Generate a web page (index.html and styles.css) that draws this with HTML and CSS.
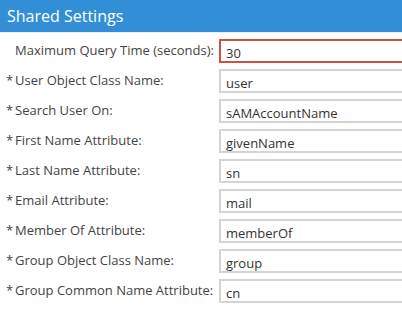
FILE: index.html
```html
<!DOCTYPE html>
<html>
<head>
<meta charset="utf-8">
<link rel="stylesheet" href="styles.css">
</head>
<body>
<div class="panel">
  <div class="panel-header">Shared Settings</div>
  <div class="form">
    <div class="row">
      <label class="label"><span class="req"></span>Maximum Query Time (seconds):</label>
      <div class="field invalid">30</div>
    </div>
    <div class="row">
      <label class="label"><span class="req">*</span>User Object Class Name:</label>
      <div class="field">user</div>
    </div>
    <div class="row">
      <label class="label"><span class="req">*</span>Search User On:</label>
      <div class="field">sAMAccountName</div>
    </div>
    <div class="row">
      <label class="label"><span class="req">*</span>First Name Attribute:</label>
      <div class="field">givenName</div>
    </div>
    <div class="row">
      <label class="label"><span class="req">*</span>Last Name Attribute:</label>
      <div class="field">sn</div>
    </div>
    <div class="row">
      <label class="label"><span class="req">*</span>Email Attribute:</label>
      <div class="field">mail</div>
    </div>
    <div class="row">
      <label class="label"><span class="req">*</span>Member Of Attribute:</label>
      <div class="field">memberOf</div>
    </div>
    <div class="row">
      <label class="label"><span class="req">*</span>Group Object Class Name:</label>
      <div class="field">group</div>
    </div>
    <div class="row">
      <label class="label"><span class="req">*</span>Group Common Name Attribute:</label>
      <div class="field">cn</div>
    </div>
  </div>
</div>
</body>
</html>
```
FILE: styles.css
```css
html, body {
  margin: 0;
  padding: 0;
  overflow: hidden;
  background: #ffffff;
}
body {
  font-family: "Open Sans", "DejaVu Sans", sans-serif;
  color: #444444;
  width: 402px;
  height: 310px;
}
.panel {
  width: 402px;
  overflow: hidden;
}
.panel-header {
  height: 32px;
  background: #328fd7;
  color: #ffffff;
  font-size: 16px;
  line-height: 33px;
  padding-left: 7px;
  border-bottom: 1px solid #e8f1fa;
}
.form {
  display: flex;
  flex-direction: column;
  gap: 6px;
  padding-top: 6px;
}
.row {
  display: flex;
  align-items: center;
  height: 24px;
}
.label {
  width: 213px;
  flex: none;
  padding-left: 6px;
  font-size: 13px;
  line-height: 18px;
  display: flex;
  align-items: baseline;
  margin-top: -2px;
  white-space: nowrap;
}
.req {
  width: 9px;
  flex: none;
  font-size: 13px;
}
.field {
  flex: none;
  width: 220px;
  border: 2px solid #d4d4d4;
  font-size: 13px;
  line-height: 20px;
  padding-left: 5px;
  padding-top: 2px;
  box-sizing: content-box;
  color: #333333;
  height: 18px;
}
.field.invalid {
  border-color: #c9533e;
}
```
